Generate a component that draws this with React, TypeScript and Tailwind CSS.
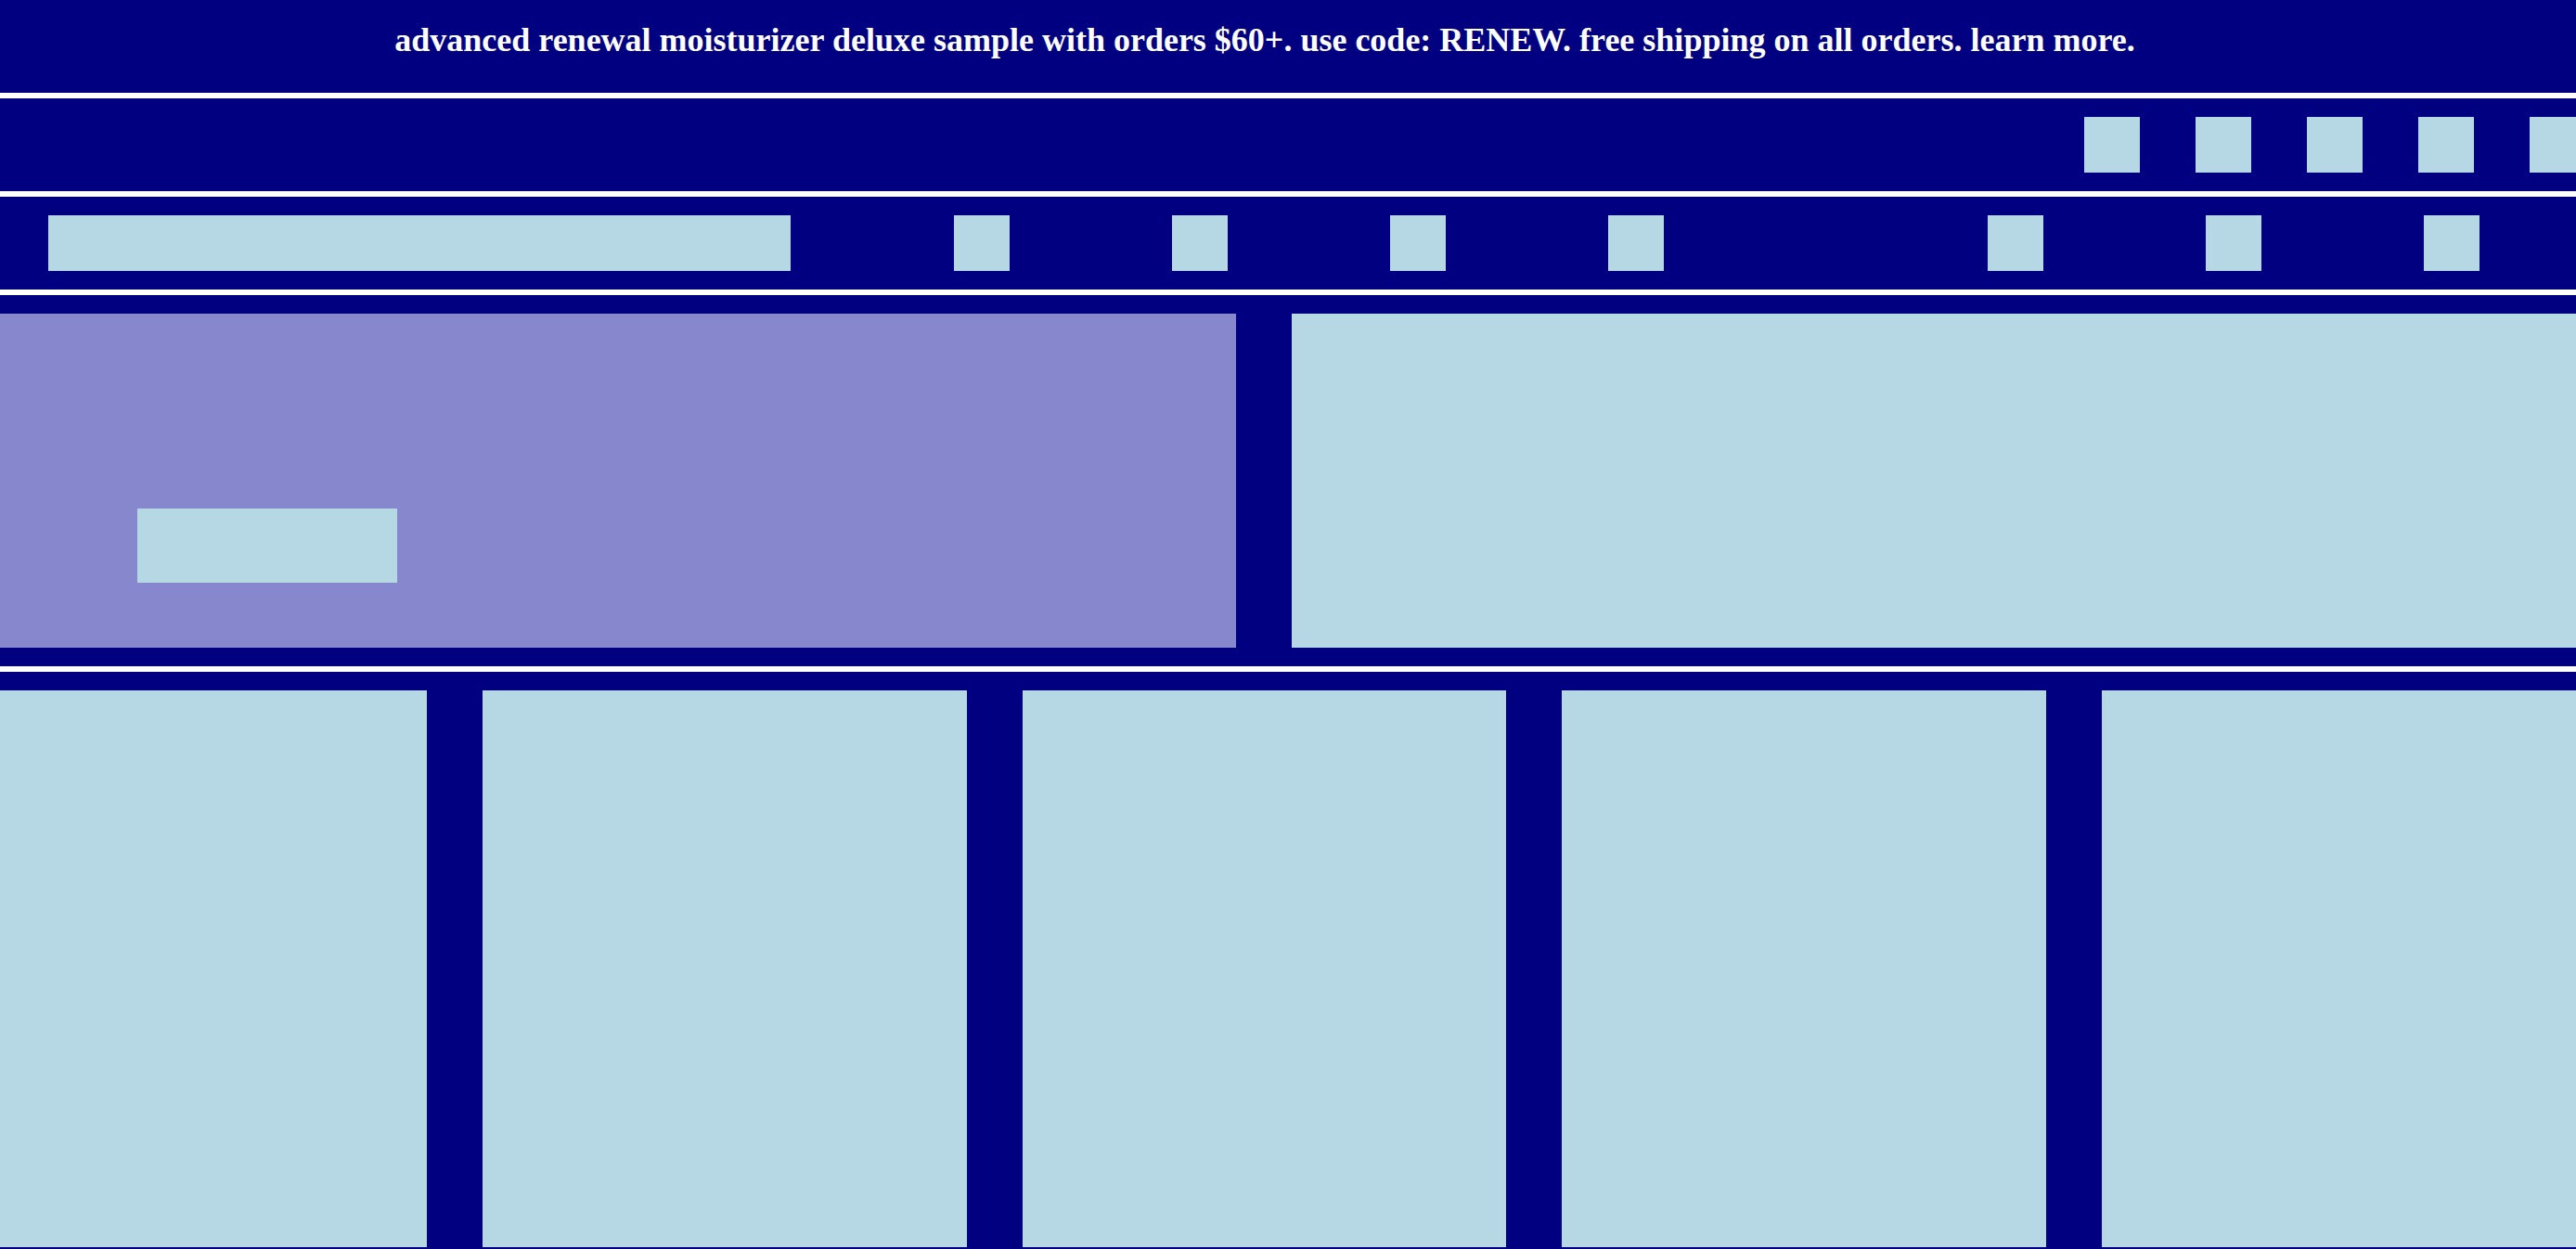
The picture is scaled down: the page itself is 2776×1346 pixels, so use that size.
const Block = ({ className = '' }: { className?: string }) => (
  <div className={`bg-[#b5d8e4] ${className}`} />
);

const App = () => {
  const headerIcons = [0, 1, 2, 3, 4];
  const navLeft = [0, 1, 2, 3];
  const navRight = [0, 1, 2];
  const cards = [0, 1, 2, 3, 4];

  return (
    <div className="w-[2776px] h-[1346px] overflow-hidden bg-white flex flex-col gap-[6px]">
      {/* Announcement bar */}
      <div className="h-[100px] shrink-0 bg-[#000080] pt-[16px] pr-[50px]">
        <p className="text-center text-white font-bold text-[36px] leading-normal font-['Liberation_Serif',serif]">
          advanced renewal moisturizer deluxe sample with orders $60+. use code: RENEW. free shipping on all orders. learn more.
        </p>
      </div>

      {/* Utility header */}
      <div className="h-[100px] shrink-0 bg-[#000080] flex items-center justify-end">
        <div className="flex gap-[60px] -mr-[10px]">
          {headerIcons.map((i) => (
            <Block key={i} className="w-[60px] h-[60px] shrink-0" />
          ))}
        </div>
      </div>

      {/* Main nav */}
      <div className="h-[100px] shrink-0 bg-[#000080] flex items-center pl-[52px]">
        <Block className="w-[800px] h-[60px] shrink-0" />
        <div className="flex gap-[175px] ml-[176px]">
          {navLeft.map((i) => (
            <Block key={i} className="w-[60px] h-[60px] shrink-0" />
          ))}
        </div>
        <div className="flex gap-[175px] ml-[349px]">
          {navRight.map((i) => (
            <Block key={i} className="w-[60px] h-[60px] shrink-0" />
          ))}
        </div>
      </div>

      {/* Hero */}
      <div className="h-[400px] shrink-0 bg-[#000080] py-[20px] flex gap-[60px]">
        <div className="w-[1332px] shrink-0 bg-[#8787cd] flex flex-col justify-end pb-[70px] pl-[148px]">
          <Block className="w-[280px] h-[80px]" />
        </div>
        <Block className="flex-1" />
      </div>

      {/* Product cards */}
      <div className="flex-1 bg-[#000080] pt-[20px]">
        <div className="flex gap-[60px] -ml-[61.5px]">
          {cards.map((i) => (
            <Block key={i} className="w-[521.5px] h-[600px] shrink-0" />
          ))}
        </div>
      </div>
    </div>
  );
};

export default App;
